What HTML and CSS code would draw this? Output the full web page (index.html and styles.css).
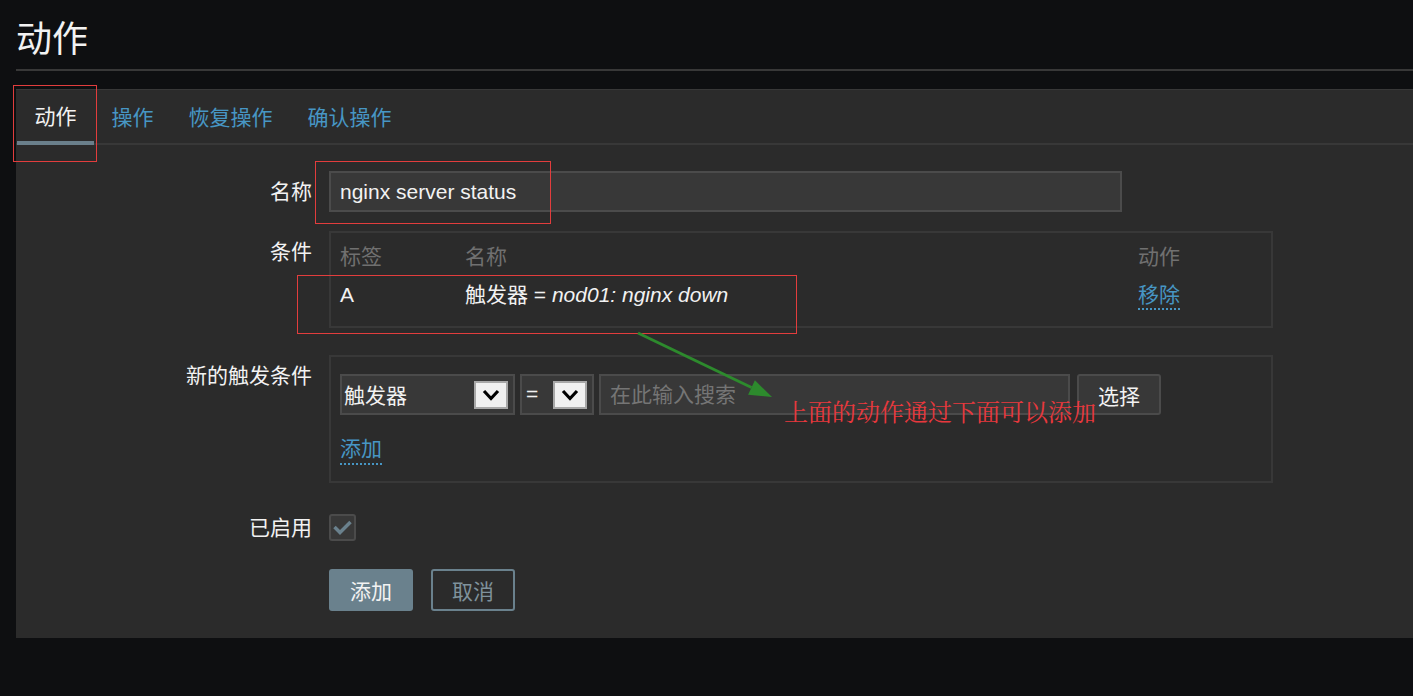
FILE: index.html
```html
<!DOCTYPE html>
<html lang="zh-CN">
<head>
    <meta charset="UTF-8">
    <meta name="viewport" content="width=device-width, initial-scale=1.0">
    <title>动作</title>
    <link rel="stylesheet" href="styles.css">
</head>
<body>
    <h1 class="page-title">动作</h1>

    <div class="panel">
        <ul class="tabs">
            <li class="tab active">动作</li>
            <li class="tab">操作</li>
            <li class="tab">恢复操作</li>
            <li class="tab">确认操作</li>
        </ul>

        <form class="action-form">
            <div class="form-row row-name">
                <label class="form-label" for="name">名称</label>
                <div class="form-field">
                    <input type="text" id="name" class="text-input name-input" value="nginx server status">
                </div>
            </div>

            <div class="form-row row-conditions">
                <div class="form-label">条件</div>
                <div class="form-field">
                    <div class="cond-box">
                        <div class="cond-head">标签</div>
                        <div class="cond-head">名称</div>
                        <div class="cond-head">动作</div>
                        <div>A</div>
                        <div>触发器 = <em>nod01: nginx down</em></div>
                        <div><a class="link">移除</a></div>
                    </div>
                </div>
            </div>

            <div class="form-row row-new">
                <div class="form-label">新的触发条件</div>
                <div class="form-field">
                    <div class="new-cond">
                        <div class="filter-row">
                            <div class="select select-type">
                                <span>触发器</span>
                                <span class="select-arrow">
                                    <svg width="18" height="12" viewBox="0 0 18 12"><path d="M2 2 L9 9.5 L16 2" fill="none" stroke="#000" stroke-width="3.2"/></svg>
                                </span>
                            </div>
                            <div class="select select-op">
                                <span>=</span>
                                <span class="select-arrow">
                                    <svg width="18" height="12" viewBox="0 0 18 12"><path d="M2 2 L9 9.5 L16 2" fill="none" stroke="#000" stroke-width="3.2"/></svg>
                                </span>
                            </div>
                            <input type="text" class="text-input search-input" placeholder="在此输入搜索">
                            <button type="button" class="btn-grey">选择</button>
                        </div>
                        <div class="add-row"><a class="link">添加</a></div>
                    </div>
                </div>
            </div>

            <div class="form-row row-enabled">
                <div class="form-label">已启用</div>
                <div class="form-field">
                    <span class="checkbox">
                        <svg width="23" height="23" viewBox="0 0 23 23"><polyline points="3.5,11 9,16.5 19.5,6" fill="none" stroke="#6a818d" stroke-width="3.5"/></svg>
                    </span>
                </div>
            </div>

            <div class="form-row row-buttons">
                <div></div>
                <div class="form-field buttons">
                    <button type="button" class="btn btn-primary">添加</button>
                    <button type="button" class="btn btn-outline">取消</button>
                </div>
            </div>
        </form>
    </div>

    <!-- screenshot annotations -->
    <div class="mark mark-tab"></div>
    <div class="mark mark-name"></div>
    <div class="mark mark-cond"></div>
    <svg class="note-arrow" width="150" height="80" viewBox="0 0 150 80">
        <line x1="8" y1="7" x2="121.5" y2="61.5" stroke="#2d8a2d" stroke-width="3"/>
        <polygon points="142,71 118.1,68.8 124.9,54.2" fill="#2d8a2d"/>
    </svg>
    <div class="note">上面的动作通过下面可以添加</div>
</body>
</html>
```

FILE: styles.css
```css
body {
    margin: 0;
    padding: 0 0 0 16px;
    background-color: #0e0f11;
    color: #f2f2f2;
    font-family: "Liberation Sans", "Noto Sans CJK SC", sans-serif;
    font-size: 21px;
    position: relative;
    min-height: 696px;
    overflow: hidden;
}

.page-title {
    margin: 0;
    padding: 22px 0 11px;
    font-size: 36px;
    line-height: 36px;
    font-weight: normal;
    border-bottom: 2px solid #383838;
}

.panel {
    margin-top: 18px;
    background-color: #2b2b2b;
    border-top: 1px solid #383838;
    padding-bottom: 27px;
}

.tabs {
    display: flex;
    list-style: none;
    margin: 0;
    padding: 0 0 0 1px;
    border-bottom: 2px solid #383838;
}

.tab {
    padding: 2px 17.5px 0;
    line-height: 51px;
    color: #4796c4;
    cursor: pointer;
}

.tab.active {
    color: #f2f2f2;
    line-height: 49px;
    border-bottom: 4px solid #6a7f8b;
    margin-bottom: -2px;
}

.action-form {
    padding-top: 26px;
}

.form-row {
    display: grid;
    grid-template-columns: 296px 1fr;
    column-gap: 17px;
}

.form-label {
    text-align: right;
    line-height: 41px;
}

.row-name { margin-bottom: 19px; }
.row-conditions { margin-bottom: 27px; }
.row-new { margin-bottom: 24px; }
.row-enabled { margin-bottom: 21px; align-items: center; }

.text-input {
    box-sizing: border-box;
    height: 41px;
    border: 2px solid #4b4b4b;
    background-color: #383838;
    color: #f2f2f2;
    font-family: inherit;
    font-size: 21px;
    padding: 0 9px;
    margin: 0;
    outline: none;
}

.text-input::placeholder {
    color: #757575;
}

.name-input {
    display: block;
    width: 793px;
}

.cond-box {
    box-sizing: border-box;
    width: 944px;
    border: 2px solid #383838;
    padding: 12px 0 16px 9px;
    display: grid;
    grid-template-columns: 125px 1fr 133px;
    row-gap: 14px;
    line-height: 24px;
}

.cond-head {
    color: #707070;
}

.link {
    color: #4796c4;
    display: inline-block;
    vertical-align: top;
    padding-bottom: 1px;
    border-bottom: 2px dotted #4796c4;
    cursor: pointer;
}

.new-cond {
    box-sizing: border-box;
    width: 944px;
    border: 2px solid #383838;
    padding: 17px 0 16px 9px;
}

.filter-row {
    display: flex;
    gap: 5px;
}

.select {
    box-sizing: border-box;
    display: flex;
    align-items: center;
    justify-content: space-between;
    height: 41px;
    border: 2px solid #4b4b4b;
    background-color: #383838;
    padding: 0 5px 2px 2px;
}

.select-type { width: 175px; }
.select-op { width: 74px; padding-left: 4px; }

.select-arrow {
    box-sizing: border-box;
    width: 34px;
    height: 28px;
    margin-top: 2px;
    display: flex;
    align-items: center;
    justify-content: center;
    background-color: #f0f0f0;
    border: 2px solid #a8a8a8;
}

.search-input {
    width: 471px;
}

.btn-grey {
    margin-left: 2px;
    width: 84px;
    height: 41px;
    border: 2px solid #4b4b4b;
    border-radius: 3px;
    background-color: #383838;
    color: #f2f2f2;
    font-family: inherit;
    font-size: 21px;
    padding: 0;
}

.add-row {
    margin-top: 22px;
    line-height: 24px;
}

.add-row .link {
    padding-bottom: 2px;
}

.checkbox {
    box-sizing: border-box;
    display: flex;
    align-items: center;
    justify-content: center;
    width: 27px;
    height: 27px;
    border: 2px solid #4b4b4b;
    border-radius: 3px;
    background-color: #383838;
}

.buttons {
    display: flex;
    gap: 18px;
}

.btn {
    box-sizing: border-box;
    width: 84px;
    height: 42px;
    border-radius: 3px;
    font-family: inherit;
    font-size: 21px;
    padding: 0;
    cursor: pointer;
}

.btn-primary {
    background-color: #6a818d;
    color: #f2f2f2;
    border: none;
}

.btn-outline {
    background-color: transparent;
    border: 2px solid #6a818d;
    color: #7f929c;
}

/* annotations drawn over the screenshot */
.mark {
    position: absolute;
    box-sizing: border-box;
    border: 1px solid #e23d3d;
    pointer-events: none;
}

.mark-tab { left: 13px; top: 85px; width: 84px; height: 77px; }
.mark-name { left: 315px; top: 161px; width: 236px; height: 63px; }
.mark-cond { left: 297px; top: 275px; width: 500px; height: 59px; }

.note-arrow {
    position: absolute;
    left: 630px;
    top: 326px;
}

.note {
    position: absolute;
    left: 784px;
    top: 399px;
    font-family: "Noto Serif CJK SC", "Noto Sans CJK SC", serif;
    font-size: 24px;
    line-height: 24px;
    color: #e8383d;
    white-space: nowrap;
}
```
